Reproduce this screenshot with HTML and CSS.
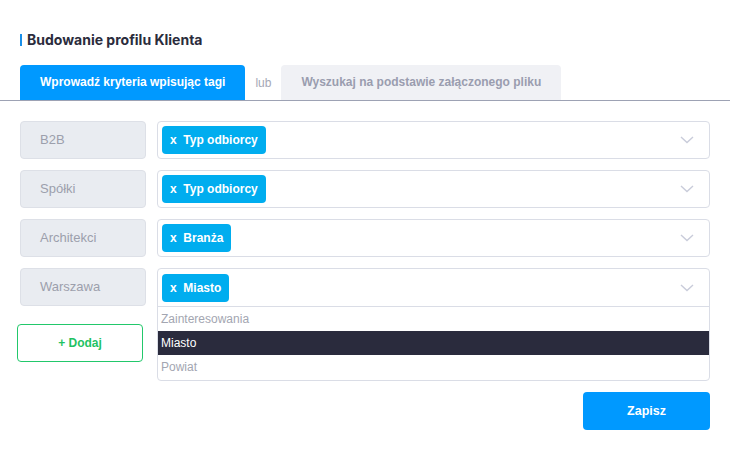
FILE: index.html
```html
<!DOCTYPE html>
<html lang="pl">
<head>
    <meta charset="UTF-8">
    <title>Budowanie profilu Klienta</title>
    <link rel="stylesheet" href="styles.css">
</head>
<body>

<h1 class="title">Budowanie profilu Klienta</h1>

<div class="tabs">
    <a href="#" class="tab active">Wprowadź kryteria wpisując tagi</a>
    <span class="tab-sep">lub</span>
    <a href="#" class="tab">Wyszukaj na podstawie załączonego pliku</a>
</div>

<div class="criteria">
    <div class="row">
        <div class="tag-input">B2B</div>
        <div class="select">
            <div class="select-head">
                <span class="chip">x&nbsp; Typ odbiorcy</span>
                <svg class="chevron" width="14" height="8" viewBox="0 0 14 8"><polyline points="1,1 7,6.5 13,1" fill="none" stroke="#c9ccda" stroke-width="1.4"/></svg>
            </div>
        </div>
    </div>
    <div class="row">
        <div class="tag-input">Spółki</div>
        <div class="select">
            <div class="select-head">
                <span class="chip">x&nbsp; Typ odbiorcy</span>
                <svg class="chevron" width="14" height="8" viewBox="0 0 14 8"><polyline points="1,1 7,6.5 13,1" fill="none" stroke="#c9ccda" stroke-width="1.4"/></svg>
            </div>
        </div>
    </div>
    <div class="row">
        <div class="tag-input">Architekci</div>
        <div class="select">
            <div class="select-head">
                <span class="chip">x&nbsp; Branża</span>
                <svg class="chevron" width="14" height="8" viewBox="0 0 14 8"><polyline points="1,1 7,6.5 13,1" fill="none" stroke="#c9ccda" stroke-width="1.4"/></svg>
            </div>
        </div>
    </div>
    <div class="row">
        <div class="left-col">
            <div class="tag-input">Warszawa</div>
            <button class="btn-add">+ Dodaj</button>
        </div>
        <div class="select open">
            <div class="select-head">
                <span class="chip">x&nbsp; Miasto</span>
                <svg class="chevron" width="14" height="8" viewBox="0 0 14 8"><polyline points="1,1 7,6.5 13,1" fill="none" stroke="#c9ccda" stroke-width="1.4"/></svg>
            </div>
            <ul class="options">
                <li>Zainteresowania</li>
                <li class="selected">Miasto</li>
                <li>Powiat</li>
            </ul>
        </div>
    </div>
</div>

<div class="actions">
    <button class="btn-save">Zapisz</button>
</div>

</body>
</html>
```

FILE: styles.css
```css
body {
    margin: 0;
    font-family: 'Liberation Sans', Arial, sans-serif;
    background-color: #fff;
    color: #2b2c3c;
}

.title {
    margin: 0;
    padding: 32px 20px 0 20px;
    font-family: 'Inter', 'Liberation Sans', sans-serif;
    font-size: 14px;
    font-weight: 700;
    line-height: 16px;
    display: flex;
    align-items: center;
}

.title::before {
    content: "";
    display: inline-block;
    width: 2px;
    height: 12px;
    background-color: #1a8fe8;
    margin-right: 5px;
}

.tabs {
    display: flex;
    align-items: center;
    padding: 0 20px;
    margin-top: 17px;
    border-bottom: 1px solid #9da2b4;
}

.tab {
    display: block;
    height: 35px;
    line-height: 35px;
    padding: 0 20px;
    border-radius: 4px 4px 0 0;
    font-size: 12px;
    font-weight: 700;
    text-decoration: none;
    background-color: #f0f1f5;
    color: #9a9daf;
}

.tab.active {
    background-color: #0099ff;
    color: #fff;
}

.tab-sep {
    padding: 0 10px;
    font-size: 12px;
    color: #a5a8b6;
}

.criteria {
    padding: 20px 20px 0 20px;
    display: flex;
    flex-direction: column;
    gap: 11px;
}

.row {
    display: flex;
    gap: 11px;
    align-items: flex-start;
}

.left-col {
    display: flex;
    flex-direction: column;
    gap: 18px;
}

.tag-input {
    box-sizing: border-box;
    width: 126px;
    height: 38px;
    line-height: 36px;
    padding-left: 19px;
    background-color: #e9ecf1;
    border: 1px solid #dde0e7;
    border-radius: 4px;
    font-size: 13px;
    color: #9c9fac;
}

.select {
    flex: 1;
    border: 1px solid #dadde6;
    border-radius: 4px;
    background-color: #fff;
}

.select-head {
    height: 36px;
    display: flex;
    align-items: center;
    justify-content: space-between;
    padding: 0 15px 0 4px;
}

.select.open .select-head {
    height: 37px;
}

.chip {
    display: inline-block;
    height: 28px;
    line-height: 28px;
    padding: 0 8px;
    background-color: #00adef;
    color: #fff;
    border-radius: 4px;
    font-size: 12px;
    font-weight: 700;
}

.chevron {
    display: block;
}

.options {
    list-style: none;
    margin: 0;
    padding: 0 0 1px 0;
    border-top: 1px solid #dadde6;
}

.options li {
    height: 24px;
    line-height: 24px;
    padding-left: 3px;
    font-size: 12px;
    color: #a3a6b1;
}

.options li.selected {
    background-color: #2a2b3d;
    color: #fff;
}

.btn-add {
    width: 126px;
    height: 38px;
    margin-left: -3px;
    background-color: #fff;
    border: 1px solid #22c86b;
    border-radius: 4px;
    color: #1fc263;
    font-family: 'Liberation Sans', Arial, sans-serif;
    font-size: 12px;
    font-weight: 700;
    cursor: pointer;
}

.actions {
    display: flex;
    justify-content: flex-end;
    padding: 11px 20px 0 20px;
}

.btn-save {
    width: 127px;
    height: 38px;
    background-color: #0099ff;
    border: none;
    border-radius: 4px;
    color: #fff;
    font-family: 'Liberation Sans', Arial, sans-serif;
    font-size: 12.5px;
    font-weight: 700;
    cursor: pointer;
}
```
